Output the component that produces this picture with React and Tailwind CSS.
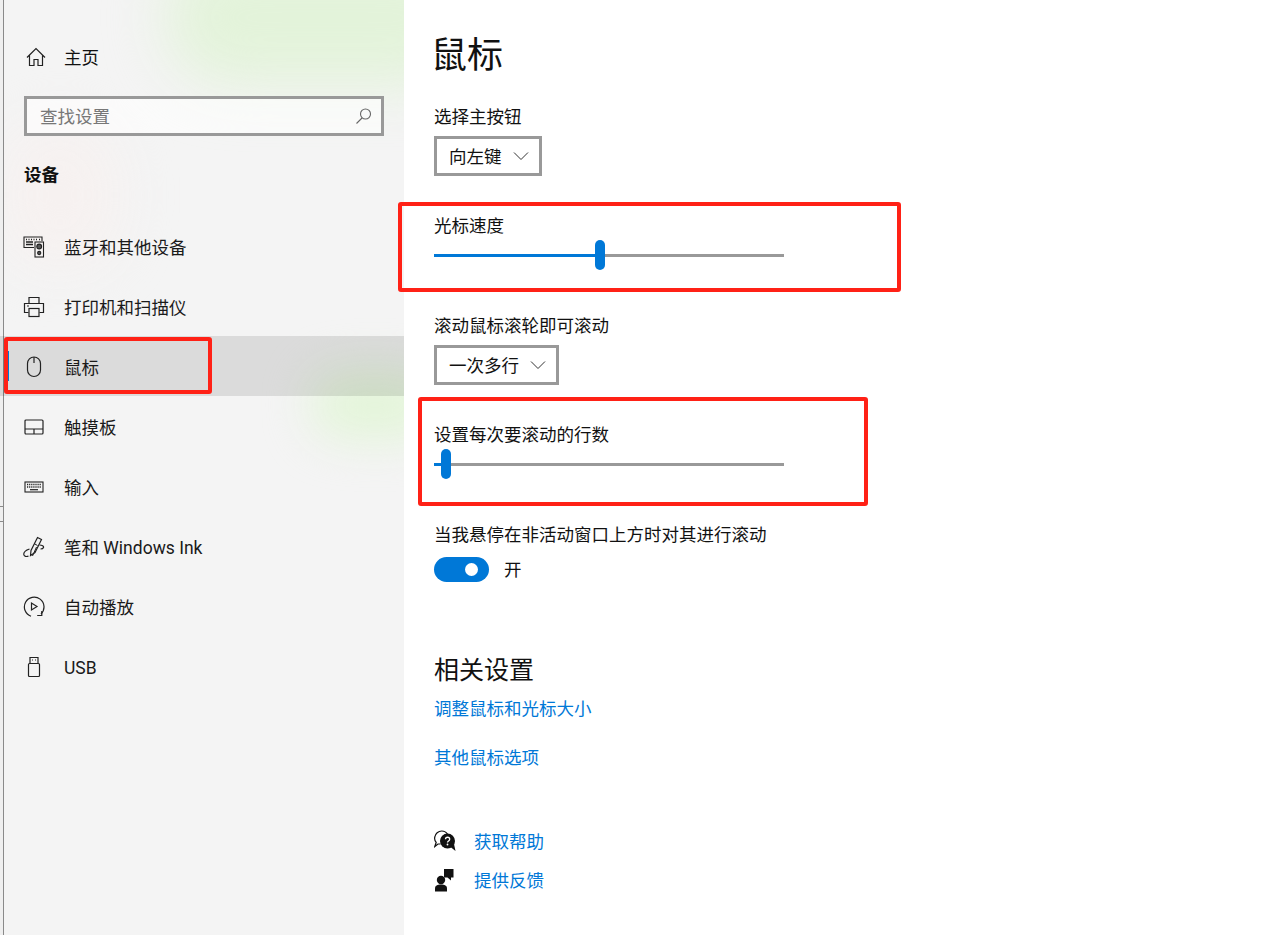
const font = "font-['Roboto','Noto_Sans_CJK_SC','Noto_Sans',sans-serif]";

const Home = () => (
  <svg width="20" height="20" viewBox="0 0 20 20" fill="none" stroke="#222" strokeWidth="1.2">
    <path d="M1 10.500 10 1.500l9 9M3.500 8.500V18.500h4.500v-6h4v6h4.500V8.500" />
  </svg>
);
const Bluetooth = () => (
  <svg width="22" height="22" viewBox="0 0 22 22" fill="none" stroke="#222" strokeWidth="1.1">
    <path d="M11 11.500H1V1h18v4" />
    <path d="M3 3.500h1M5.500 3.500h1M8 3.500h1M10.500 3.500h1M13 3.500h1M16 3.500h1M3 6h7M3 8.500h7" strokeWidth="1.4" />
    <rect x="12" y="6" width="8.500" height="15" />
    <circle cx="16.200" cy="10.500" r="2.400" fill="#555" />
    <circle cx="16.200" cy="17" r="1.600" fill="#555" />
  </svg>
);
const Printer = () => (
  <svg width="22" height="22" viewBox="0 0 22 22" fill="none" stroke="#222" strokeWidth="1.2">
    <path d="M6 7V1.500h10V7M5.500 16.500H1.500V7.500h19v9h-4" />
    <rect x="6" y="12.500" width="10" height="8" />
    <path d="M4 10h2" />
  </svg>
);
const Mouse = () => (
  <svg width="18" height="22" viewBox="0 0 18 22" fill="none" stroke="#222" strokeWidth="1.2">
    <rect x="2.500" y="1" width="13" height="19.500" rx="6.500" />
    <path d="M9 1v6" />
  </svg>
);
const Touchpad = () => (
  <svg width="20" height="18" viewBox="0 0 20 18" fill="none" stroke="#222" strokeWidth="1.2">
    <rect x="1" y="2" width="18" height="14" rx="1" />
    <path d="M1 11h18M10 11v5" />
  </svg>
);
const Keyboard = () => (
  <svg width="20" height="14" viewBox="0 0 20 14" fill="none" stroke="#222" strokeWidth="1.1">
    <rect x="1" y="2" width="18" height="10" />
    <path d="M3 4.500h14M3 7h14" strokeWidth="1.4" strokeDasharray="1.2 0.9" />
    <path d="M6 9.700h8" strokeWidth="1.2" />
  </svg>
);
const Pen = () => (
  <svg width="22" height="22" viewBox="0 0 22 22" fill="none" stroke="#222" strokeWidth="1.2">
    <path d="M7.500 19.500 8 14.500 14.500 1.500l4 2-6.500 13z" />
    <path d="M11 7.500l3.500 2M9.500 20l4-9" strokeWidth="1" />
    <path d="M16.500 9c2.500 0 4.500 1 4 2.500-.3 1-1.500 1.500-3 1.500M6.500 13C3.500 14 .5 16 .8 18.500c.2 2 2.700 2.500 4.700 1.500" />
  </svg>
);
const Autoplay = () => (
  <svg width="22" height="22" viewBox="0 0 22 22" fill="none" stroke="#222" strokeWidth="1.2">
    <path d="M8 20.200A9.800 9.800 0 1 1 18 18" />
    <path d="M8.500 7v7l5.500-3.500zM18.800 15v4.500h-4.600" />
  </svg>
);
const Usb = () => (
  <svg width="14" height="22" viewBox="0 0 14 22" fill="none" stroke="#222" strokeWidth="1.2">
    <path d="M3 7.500V1.500h8v6" />
    <rect x="1.500" y="7.500" width="11" height="13" rx="1" />
    <path d="M5 4h1M8 4h1" />
  </svg>
);
const Chevron = () => (
  <svg width="16" height="10" viewBox="0 0 16 10" fill="none" stroke="#333" strokeWidth="1">
    <path d="M1 1.500 8 8.500l7-7" />
  </svg>
);
const Search = () => (
  <svg width="18" height="18" viewBox="0 0 18 18" fill="none" stroke="#666" strokeWidth="1.1">
    <circle cx="10.500" cy="7" r="5" />
    <path d="M7 11 1.500 16.500" />
  </svg>
);
const Help = () => (
  <svg width="22" height="22" viewBox="0 0 22 22">
    <path d="M6.500 14H4L.8 16.500l1.400-4.200C.8 10.800.4 8.700.8 7c.6-3.200 3.400-6 6.900-6 2.500 0 4.700 1.200 5.800 3.300" fill="none" stroke="#111" strokeWidth="1.2" />
    <circle cx="13.500" cy="11" r="7.500" fill="#111" />
    <path d="M16.500 17l5 4-1.500-7z" fill="#111" />
    <path d="M11.500 9.200c0-2.600 4.200-2.600 4.200 0 0 1.700-2.200 1.700-2.200 3.300" fill="none" stroke="#fff" strokeWidth="1.3" />
    <circle cx="13.500" cy="14.500" r="0.900" fill="#fff" />
  </svg>
);
const Feedback = () => (
  <svg width="22" height="24" viewBox="0 0 22 24" fill="#111">
    <circle cx="7" cy="12" r="4.200" />
    <path d="M1 23.500v-3c0-3 2.300-4 6-4s6 1 6 4v3z" />
    <path d="M10 1h9.500v8.500h-2.500v3l-3.500-3H10z" />
  </svg>
);

const navItems = [
  { label: "蓝牙和其他设备", icon: <Bluetooth /> },
  { label: "打印机和扫描仪", icon: <Printer /> },
  { label: "鼠标", icon: <Mouse />, active: true },
  { label: "触摸板", icon: <Touchpad /> },
  { label: "输入", icon: <Keyboard /> },
  { label: "笔和 Windows Ink", icon: <Pen /> },
  { label: "自动播放", icon: <Autoplay /> },
  { label: "USB", icon: <Usb /> },
];

function NavItem({ item }) {
  return (
    <div className={"relative flex h-[60px] items-center pl-[23px] pt-[2px] " + (item.active ? "bg-black/10" : "")}>
      {item.active && <span className="absolute left-[7px] top-[15px] h-[30px] w-[2px] bg-[#0078d7]" />}
      <span className="flex w-[22px] justify-center">{item.icon}</span>
      <span className="ml-[19px] mt-[2px] text-[17.5px] text-[#1a1a1a]">{item.label}</span>
    </div>
  );
}

function Dropdown({ value, width }) {
  return (
    <div className={"mt-[8px] flex h-[40px] items-center justify-between border-[3px] border-[#999999] pl-[12px] pr-[10px] text-[17.5px] text-[#111] " + width}>
      <span className="mt-[2px]">{value}</span>
      <Chevron />
    </div>
  );
}

function Slider({ filled }) {
  return (
    <div className="relative mt-[3px] h-[30px] w-[350px]">
      <div className="absolute left-0 top-[14px] h-[3px] w-full bg-[#999999]" />
      <div className="absolute left-0 top-[14px] h-[3px] bg-[#0078d7]" style={{ width: filled }} />
      <div className="absolute top-0 h-[30px] w-[10px] rounded-full bg-[#0078d7]" style={{ left: filled - 5 }} />
    </div>
  );
}

export default function App() {
  return (
    <div className={"relative flex h-[935px] w-[1262px] overflow-hidden bg-white " + font}>
      {/* left sidebar */}
      <aside className="relative h-full w-[404px] shrink-0 overflow-hidden bg-[#f4f4f4]">
        <div className="absolute -top-[50px] left-[165px] h-[135px] w-[320px] rounded-full bg-[#e3f3da] blur-[28px]" />
        <div className="absolute left-[310px] top-[370px] h-[70px] w-[130px] rounded-full bg-[#e4f5da] blur-[22px]" />
        <div className="absolute left-0 top-[120px] h-[150px] w-[120px] rounded-full bg-[#f6f1f0] blur-[25px]" />
        <div className="absolute left-0 top-0 h-full w-[4px] border-r border-[#8a8a8a] bg-[#efefef]" />
        <div className="absolute left-0 top-[506px] h-[16px] w-[3px] border-y border-[#8a8a8a]" />

        <div className="relative">
          <div className="flex h-[60px] items-center pl-[26px] pt-[54px]">
            <Home />
            <span className="ml-[18px] mt-[2px] text-[17.5px] text-[#111]">主页</span>
          </div>
          <div className="ml-[24px] mt-[36px] flex h-[40px] w-[360px] items-center justify-between border-[3px] border-[#999999] bg-white/60 pl-[13px] pr-[8px] text-[17.5px] text-[#777]">
            <span className="mt-[2px]">查找设置</span>
            <Search />
          </div>
          <div className="ml-[24px] mt-[26px] h-[24px] text-[17.5px] font-bold leading-[26px] text-[#111]">设备</div>
          <nav className="mt-[30px]">
            {navItems.map((item) => (
              <NavItem key={item.label} item={item} />
            ))}
          </nav>
        </div>
      </aside>

      {/* content */}
      <main className="flex-1 pl-[30px] text-[17.5px] text-[#111]">
        <h1 className="mt-[32px] -ml-[3px] h-[48px] text-[36px] leading-[48px] text-[#111]">鼠标</h1>
        <div className="mt-[24px] h-[24px] leading-[26px]">选择主按钮</div>
        <Dropdown value="向左键" width="w-[108px]" />
        <div className="mt-[37px] h-[24px] leading-[26px]">光标速度</div>
        <Slider filled={166} />
        <div className="mt-[43px] h-[24px] leading-[26px]">滚动鼠标滚轮即可滚动</div>
        <Dropdown value="一次多行" width="w-[125px]" />
        <div className="mt-[37px] h-[24px] leading-[26px]">设置每次要滚动的行数</div>
        <Slider filled={12} />
        <div className="mt-[43px] h-[24px] leading-[26px]">当我悬停在非活动窗口上方时对其进行滚动</div>
        <div className="mt-[11px] flex h-[25px] items-center">
          <div className="relative h-[25px] w-[55px] rounded-full bg-[#0078d7]">
            <span className="absolute right-[11px] top-[6px] h-[13px] w-[13px] rounded-full bg-white" />
          </div>
          <span className="ml-[15px] mt-[2px]">开</span>
        </div>
        <h2 className="mt-[71px] h-[34px] text-[25px] leading-[36px] text-[#111]">相关设置</h2>
        <a className="mt-[9px] block h-[24px] leading-[26px] text-[#0078d7]">调整鼠标和光标大小</a>
        <a className="mt-[25px] block h-[24px] leading-[26px] text-[#0078d7]">其他鼠标选项</a>
        <div className="mt-[60px] flex h-[24px] items-center leading-[24px]">
          <Help />
          <a className="ml-[18px] mt-[2px] text-[#0078d7]">获取帮助</a>
        </div>
        <div className="mt-[15px] flex h-[24px] items-center leading-[24px]">
          <Feedback />
          <a className="ml-[18px] mt-[2px] text-[#0078d7]">提供反馈</a>
        </div>
      </main>

      {/* red annotation boxes */}
      <div className="absolute left-[4px] top-[337px] h-[57px] w-[208px] rounded-[3px] border-[4px] border-[#ff2116]" />
      <div className="absolute left-[398px] top-[202px] h-[90px] w-[503px] rounded-[3px] border-[4px] border-[#ff2116]" />
      <div className="absolute left-[418px] top-[397px] h-[109px] w-[450px] rounded-[3px] border-[4px] border-[#ff2116]" />
    </div>
  );
}
